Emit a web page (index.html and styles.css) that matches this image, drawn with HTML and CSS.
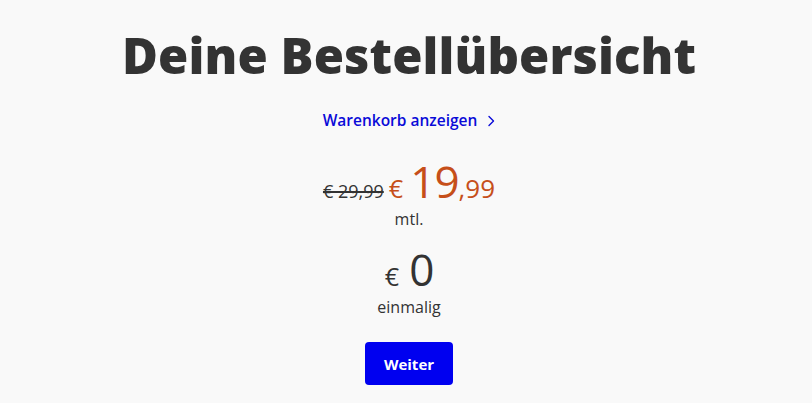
FILE: index.html
```html
<!DOCTYPE html>
<html lang="de">

<head>
    <meta charset="UTF-8">
    <meta name="viewport" content="width=device-width, initial-scale=1.0">
    <title>Deine Bestellübersicht</title>
    <link rel="stylesheet" href="styles.css">
</head>

<body>
    <main class="summary">
        <h1 class="summary-title">Deine Bestellübersicht</h1>

        <a class="cart-link" href="#">
            Warenkorb anzeigen
            <svg class="cart-chevron" width="8" height="12" viewBox="0 0 8 12">
                <path d="M2 1.5 L6.5 6 L2 10.5" fill="none" stroke="currentColor" stroke-width="1.4" stroke-linecap="round" stroke-linejoin="round" />
            </svg>
        </a>

        <div class="price-block">
            <div class="price-line">
                <s class="price-old">€ 29,99</s>
                <span class="price-now">
                    <span class="price-currency">€</span>
                    <span class="price-main">19</span><span class="price-cents">,99</span>
                </span>
            </div>
            <div class="price-label">mtl.</div>
        </div>

        <div class="price-block">
            <div class="price-line">
                <span class="price-once">
                    <span class="price-currency">€</span>
                    <span class="price-main">0</span>
                </span>
            </div>
            <div class="price-label">einmalig</div>
        </div>

        <button class="next-button" type="button">Weiter</button>
    </main>
</body>

</html>
```

FILE: styles.css
```css
body {
    margin: 0;
    background-color: #f9f9f9;
    font-family: "Open Sans", "Noto Sans", sans-serif;
    color: #333;
}

.summary {
    display: flex;
    flex-direction: column;
    align-items: center;
    padding-top: 22px;
    padding-left: 6px;
}

.summary-title {
    margin: 0;
    font-size: 49px;
    font-weight: 800;
    letter-spacing: 0.1px;
    line-height: 66px;
    color: #333;
}

.cart-link {
    display: flex;
    align-items: center;
    gap: 10px;
    margin-top: 21px;
    font-size: 15.5px;
    font-weight: 600;
    color: #0a0ad8;
    text-decoration: none;
}

.cart-chevron {
    margin-top: 1px;
}

.price-block {
    display: flex;
    flex-direction: column;
    align-items: center;
}

.price-block:first-of-type {
    margin-top: 26px;
}

.price-line {
    display: flex;
    align-items: baseline;
    gap: 5px;
    line-height: 48px;
}

.price-old {
    font-size: 18px;
    color: #333;
    text-decoration-thickness: 1.5px;
}

.price-now {
    color: #c64f1a;
}

.price-currency {
    font-size: 25px;
    font-weight: 500;
    margin-right: 3px;
}

.price-main {
    font-size: 44px;
    font-weight: 400;
    letter-spacing: -1px;
}

.price-cents {
    font-size: 26px;
}

.price-once .price-currency {
    margin-right: 6px;
}

.price-label {
    font-size: 16px;
    line-height: 20px;
    margin-top: -7px;
}

.price-block + .price-block {
    margin-top: 16px;
}

.next-button {
    margin-top: 25px;
    width: 88px;
    height: 43px;
    border: none;
    border-radius: 4px;
    background-color: #0000f0;
    color: #fff;
    font-family: inherit;
    font-size: 15px;
    font-weight: 700;
    cursor: pointer;
}
```
